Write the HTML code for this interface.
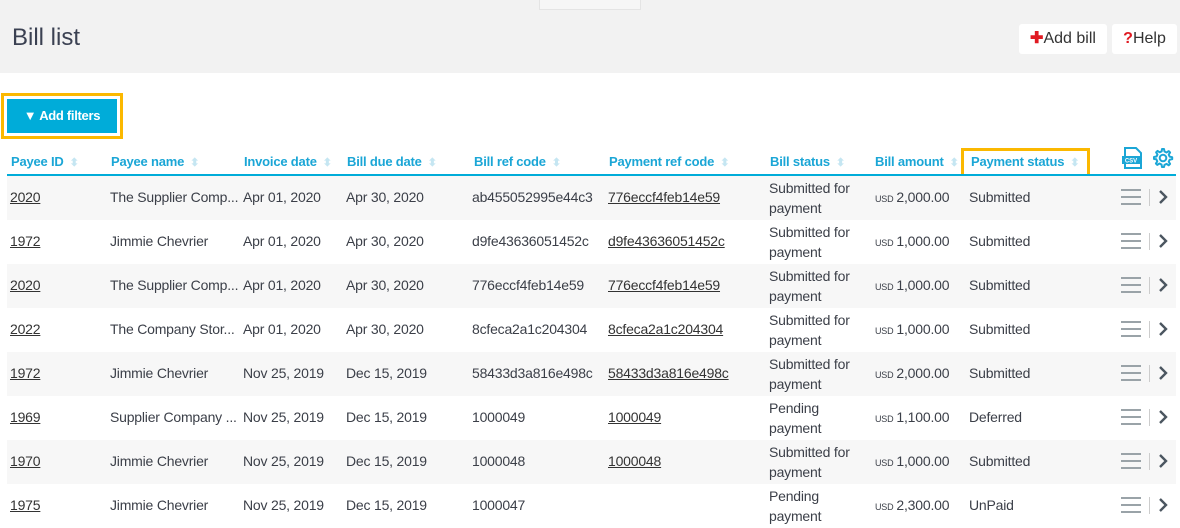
<!DOCTYPE html>
<html><head><style>
*{margin:0;padding:0;box-sizing:border-box}
body{width:1180px;height:525px;overflow:hidden;background:#fff;font-family:"Liberation Sans",sans-serif;color:#3b3f48;font-size:14px;position:relative}
.top{position:absolute;left:0;top:0;width:1180px;height:73px;background:#f2f2f2}
.tab{position:absolute;left:539px;top:0;width:102px;height:10px;border:1px solid #e4e4e4;border-top:none;background:#f6f6f6}
h1{position:absolute;left:12px;top:24px;font-weight:normal;font-size:24px;color:#3b4152}
.btn{position:absolute;top:24px;height:30px;background:#fff;border-radius:3px;font-size:16px;line-height:30px;color:#333;text-align:center}
.btn b{color:#e01a22}
.hl{position:absolute;border:3px solid #fbb800}
.filt{position:absolute;left:7px;top:99px;width:110px;height:34px;background:#00acd9;color:#fff;font-weight:bold;font-size:13px;line-height:34px;text-align:center;letter-spacing:-0.3px}
.hd{position:absolute;top:154px;color:#1ba6d6;font-weight:bold;font-size:13px;white-space:nowrap;letter-spacing:-0.2px}
.hd i{font-style:normal;color:#c5e6f2;font-size:11px;margin-left:6px}
.line{position:absolute;left:7px;top:174px;width:1169px;height:2px;background:#00acd9}
.row{position:absolute;left:7px;width:1169px;height:44px}
.g{background:#f7f7f7}
.c{position:absolute;white-space:nowrap;font-size:14px;letter-spacing:-0.2px}
.u{text-decoration:underline;color:#333}
.two{line-height:20px;font-size:14px}
.usd{font-size:9px;margin-right:3px}
.ham{position:absolute;left:1121px;width:20px}
.ham div{height:2px;background:#9aa3a8;margin-bottom:5px}
.sep{position:absolute;left:1149px;width:1px;height:17px;background:#ccc}
.chev{position:absolute;left:1157px}
</style></head><body>
<div class="top"></div><div class="tab"></div>
<h1>Bill list</h1>
<div class="btn" style="left:1019px;width:88px"><b>✚</b>Add bill</div>
<div class="btn" style="left:1112px;width:65px"><b>?</b>Help</div>
<div class="hl" style="left:1px;top:93px;width:122px;height:46px"></div>
<div class="filt">▼ Add filters</div>
<div class="hd" style="left:11px">Payee ID<i>⬍</i></div>
<div class="hd" style="left:111px">Payee name<i>⬍</i></div>
<div class="hd" style="left:244px">Invoice date<i>⬍</i></div>
<div class="hd" style="left:347px">Bill due date<i>⬍</i></div>
<div class="hd" style="left:474px">Bill ref code<i>⬍</i></div>
<div class="hd" style="left:609px">Payment ref code<i>⬍</i></div>
<div class="hd" style="left:770px">Bill status<i>⬍</i></div>
<div class="hd" style="left:875px">Bill amount<i>⬍</i></div>
<div class="hd" style="left:971px">Payment status<i>⬍</i></div>
<div class="hl" style="left:961px;top:148px;width:129px;height:35px"></div>
<svg style="position:absolute;left:1121px;top:146px" width="24" height="24" viewBox="0 0 24 24"><path d="M4 2h11l5 5v15H4z" fill="none" stroke="#1ba6d6" stroke-width="2"/><rect x="1" y="10" width="18" height="8" fill="#1ba6d6"/><text x="10" y="16.5" font-size="6" fill="#fff" text-anchor="middle" font-weight="bold" font-family="Liberation Sans">CSV</text></svg>
<svg style="position:absolute;left:1150px;top:146px" width="24" height="24" viewBox="0 0 24 24"><path d="M12 3l2 0 .5 2.5 2 1 2.2-1.4 1.4 1.4-1.4 2.2 1 2 2.5.5v2l-2.5.5-1 2 1.4 2.2-1.4 1.4-2.2-1.4-2 1L14 21h-2l-.5-2.5-2-1-2.2 1.4-1.4-1.4 1.4-2.2-1-2L4 13v-2l2.5-.5 1-2L6.1 6.3 7.5 4.9l2.2 1.4 2-1z" fill="none" stroke="#1ba6d6" stroke-width="2" stroke-linejoin="round"/><circle cx="13" cy="12" r="3.3" fill="none" stroke="#1ba6d6" stroke-width="2"/></svg>
<div class="line"></div>

<div id="rows"></div>
<script>
var d=[
["2020","The Supplier Comp...","Apr 01, 2020","Apr 30, 2020","ab455052995e44c3","776eccf4feb14e59","Submitted for|payment","2,000.00","Submitted"],
["1972","Jimmie Chevrier","Apr 01, 2020","Apr 30, 2020","d9fe43636051452c","d9fe43636051452c","Submitted for|payment","1,000.00","Submitted"],
["2020","The Supplier Comp...","Apr 01, 2020","Apr 30, 2020","776eccf4feb14e59","776eccf4feb14e59","Submitted for|payment","1,000.00","Submitted"],
["2022","The Company Stor...","Apr 01, 2020","Apr 30, 2020","8cfeca2a1c204304","8cfeca2a1c204304","Submitted for|payment","1,000.00","Submitted"],
["1972","Jimmie Chevrier","Nov 25, 2019","Dec 15, 2019","58433d3a816e498c","58433d3a816e498c","Submitted for|payment","2,000.00","Submitted"],
["1969","Supplier Company ...","Nov 25, 2019","Dec 15, 2019","1000049","1000049","Pending|payment","1,100.00","Deferred"],
["1970","Jimmie Chevrier","Nov 25, 2019","Dec 15, 2019","1000048","1000048","Submitted for|payment","1,000.00","Submitted"],
["1975","Jimmie Chevrier","Nov 25, 2019","Dec 15, 2019","1000047","","Pending|payment","2,300.00","UnPaid"]];
var h="";
d.forEach(function(r,i){
var y=176+i*44,t=y+13;
h+='<div class="row'+(i%2==0?' g':'')+'" style="top:'+y+'px"></div>';
h+='<div class="c u" style="left:10px;top:'+t+'px">'+r[0]+'</div>';
h+='<div class="c" style="left:110px;top:'+t+'px">'+r[1]+'</div>';
h+='<div class="c" style="left:243px;top:'+t+'px">'+r[2]+'</div>';
h+='<div class="c" style="left:346px;top:'+t+'px">'+r[3]+'</div>';
h+='<div class="c" style="left:472px;top:'+t+'px">'+r[4]+'</div>';
h+='<div class="c u" style="left:608px;top:'+t+'px">'+r[5]+'</div>';
h+='<div class="c two" style="left:769px;top:'+(y+2)+'px">'+r[6].replace("|","<br>")+'</div>';
h+='<div class="c" style="left:875px;top:'+t+'px"><span class="usd">USD</span>'+r[7]+'</div>';
h+='<div class="c" style="left:969px;top:'+t+'px">'+r[8]+'</div>';
h+='<div class="ham" style="top:'+(y+13)+'px"><div></div><div></div><div></div></div>';
h+='<div class="sep" style="top:'+(y+13)+'px"></div>';
h+='<svg class="chev" style="top:'+(y+13)+'px" width="12" height="16" viewBox="0 0 12 16"><path d="M3 2l6 6-6 6" fill="none" stroke="#4b5660" stroke-width="2.4"/></svg>';
});
document.getElementById("rows").innerHTML=h;
</script>
</body></html>
